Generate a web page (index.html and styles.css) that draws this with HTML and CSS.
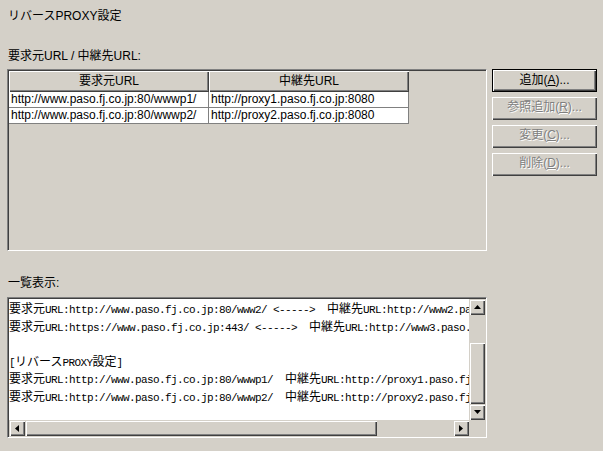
FILE: index.html
```html
<!DOCTYPE html>
<html lang="ja">
<head>
<meta charset="utf-8">
<title>リバースPROXY設定</title>
<link rel="stylesheet" href="styles.css">
</head>
<body>
<div class="page">
  <div class="title">リバースPROXY設定</div>
  <div class="label label-top">要求元URL / 中継先URL:</div>
  <div class="main">
    <div class="frame table-frame">
      <div class="grid">
        <div class="hcell">要求元URL</div>
        <div class="hcell">中継先URL</div>
        <div class="cell">http://www.paso.fj.co.jp:80/wwwp1/</div>
        <div class="cell">http://proxy1.paso.fj.co.jp:8080</div>
        <div class="cell">http://www.paso.fj.co.jp:80/wwwp2/</div>
        <div class="cell">http://proxy2.paso.fj.co.jp:8080</div>
      </div>
    </div>
    <div class="buttons">
      <div class="btn btn-default">追加(<u>A</u>)...</div>
      <div class="btn btn-disabled">参照追加(<u>R</u>)...</div>
      <div class="btn btn-disabled">変更(<u>C</u>)...</div>
      <div class="btn btn-disabled">削除(<u>D</u>)...</div>
    </div>
  </div>
  <div class="label label-list">一覧表示:</div>
  <div class="frame list-frame">
    <div class="list-body">
      <div class="text">
        <div class="line"><span class="jp">要求元</span>URL:http://www.paso.fj.co.jp:80/www2/ &lt;-----&gt;  <span class="jp">中継先</span>URL:http://www2.paso.fj.co.jp</div>
        <div class="line"><span class="jp">要求元</span>URL:https://www.paso.fj.co.jp:443/ &lt;-----&gt;  <span class="jp">中継先</span>URL:http://www3.paso.fj.co.jp</div>
        <div class="line"> </div>
        <div class="line">[<span class="jp">リバース</span>PROXY<span class="jp">設定</span>]</div>
        <div class="line"><span class="jp">要求元</span>URL:http://www.paso.fj.co.jp:80/wwwp1/  <span class="jp">中継先</span>URL:http://proxy1.paso.fj.co.jp:8080</div>
        <div class="line"><span class="jp">要求元</span>URL:http://www.paso.fj.co.jp:80/wwwp2/  <span class="jp">中継先</span>URL:http://proxy2.paso.fj.co.jp:8080</div>
      </div>
      <div class="vscroll">
        <div class="sbtn"><svg width="7" height="4" viewBox="0 0 7 4"><polygon points="3.5,0 7,4 0,4" fill="#000"/></svg></div>
        <div class="vtrack-top"></div>
        <div class="thumb vthumb"></div>
        <div class="sbtn"><svg width="7" height="4" viewBox="0 0 7 4"><polygon points="0,0 7,0 3.5,4" fill="#000"/></svg></div>
      </div>
      <div class="hscroll">
        <div class="sbtn"><svg width="4" height="7" viewBox="0 0 4 7"><polygon points="0,3.5 4,0 4,7" fill="#000"/></svg></div>
        <div class="thumb hthumb"></div>
        <div class="htrack"></div>
        <div class="sbtn"><svg width="4" height="7" viewBox="0 0 4 7"><polygon points="0,0 4,3.5 0,7" fill="#000"/></svg></div>
      </div>
      <div class="corner"></div>
    </div>
  </div>
</div>
</body>
</html>
```
FILE: styles.css
```css
* { box-sizing: border-box; }
html, body {
  margin: 0;
  padding: 0;
  background: #d4d0c8;
}
body {
  font-family: "Liberation Sans", "Noto Sans CJK JP", sans-serif;
  font-size: 12px;
  color: #000;
}
.page {
  padding: 8px 6px 0 7px;
  width: 603px;
  height: 451px;
  overflow: hidden;
}
.title {
  height: 16px;
  line-height: 16px;
  padding-left: 1px;
}
.label {
  height: 16px;
  line-height: 16px;
  padding-left: 1px;
}
.label-top { margin-top: 24px; }
.label-list { margin-top: 24px; }

.main {
  display: flex;
  gap: 5px;
  margin-top: 5px;
}
.frame {
  border: 1px solid;
  border-color: #808080 #ffffff #ffffff #808080;
  box-shadow: inset 1px 1px #404040, inset -1px -1px #d4d0c8;
  padding: 1px;
}
.table-frame {
  width: 480px;
  height: 182px;
}
.grid {
  display: grid;
  grid-template-columns: 200px 200px;
  grid-template-rows: 21px 16px 16px;
}
.hcell {
  background: #d4d0c8;
  box-shadow: inset 1px 1px #ffffff, inset -1px -1px #404040, inset -2px -2px #808080;
  text-align: center;
  line-height: 20px;
}
.cell {
  background: #ffffff;
  border-right: 1px solid #808080;
  border-bottom: 1px solid #808080;
  padding-left: 2px;
  line-height: 15px;
  white-space: nowrap;
  overflow: hidden;
}
.buttons {
  display: flex;
  flex-direction: column;
  gap: 5px;
}
.btn {
  width: 105px;
  height: 23px;
  line-height: 21px;
  text-align: center;
  background: #d4d0c8;
  box-shadow: inset 1px 1px #ffffff, inset -1px -1px #404040, inset -2px -2px #808080;
}
.btn-default {
  border: 1px solid #000;
  line-height: 20px;
}
.btn-disabled {
  color: #808080;
  text-shadow: 1px 1px 0 #ffffff;
}

.list-frame {
  margin-top: 6px;
  width: 480px;
  height: 141px;
}
.list-body {
  display: grid;
  grid-template-columns: 460px 16px;
  grid-template-rows: 121px 16px;
}
.text {
  background: #ffffff;
  overflow: hidden;
  font-family: "Liberation Mono", "Noto Sans CJK JP", monospace;
  font-size: 11px;
  letter-spacing: -0.6px;
}
.line {
  height: 17.5px;
  line-height: 17.5px;
  white-space: pre;
}
.jp {
  font-family: "Noto Sans CJK JP", sans-serif;
  font-size: 12px;
  letter-spacing: 0;
}
.vscroll {
  display: flex;
  flex-direction: column;
  background: #d4d0c8;
}
.hscroll {
  display: flex;
  background: #d4d0c8;
}
.sbtn {
  width: 16px;
  height: 16px;
  flex: none;
  display: flex;
  align-items: center;
  justify-content: center;
  background: #d4d0c8;
  box-shadow: inset 1px 1px #d4d0c8, inset 2px 2px #ffffff, inset -1px -1px #404040, inset -2px -2px #808080;
}
.sbtn svg { display: block; }
.thumb {
  background: #d4d0c8;
  box-shadow: inset 1px 1px #d4d0c8, inset 2px 2px #ffffff, inset -1px -1px #404040, inset -2px -2px #808080;
}
.vtrack-top { height: 27px; }
.vthumb { height: 62px; }
.hthumb { width: 352px; }
.htrack { width: 76px; }
.corner { background: #d4d0c8; }
```
